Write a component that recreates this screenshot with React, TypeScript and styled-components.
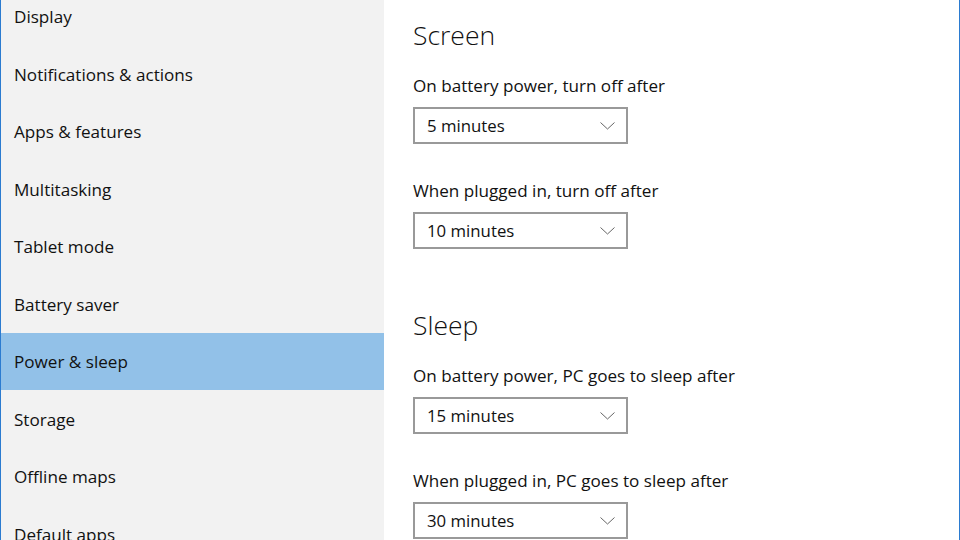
import React from "react";
import styled, { createGlobalStyle } from "styled-components";

const Global = createGlobalStyle`
  html, body { margin: 0; padding: 0; background: #fff; }
  body { font-family: "Segoe UI", "Open Sans", sans-serif; }
  #root { width: 960px; height: 540px; overflow: hidden; }
`;

const Window = styled.div`
  width: 960px;
  height: 540px;
  display: flex;
  box-sizing: border-box;
  border-left: 1px solid #2b7bd0;
  border-right: 1px solid #2b7bd0;
  overflow: hidden;
  background: #fff;
`;

const Sidebar = styled.nav`
  width: 383px;
  flex: none;
  background: #f2f2f2;
  display: flex;
  flex-direction: column;
  overflow: hidden;
`;

const NavList = styled.div`
  display: flex;
  flex-direction: column;
  margin-top: -12.25px;
`;

const NavItem = styled.div<{ $active?: boolean }>`
  height: 57.5px;
  flex: none;
  display: flex;
  align-items: center;
  padding-left: 13px;
  font-size: 17.1px;
  color: #111;
  background: ${(p) => (p.$active ? "#92c1e8" : "transparent")};
`;

const Content = styled.main`
  flex: 1;
  padding: 15px 0 0 29px;
  display: flex;
  flex-direction: column;
`;

const Section = styled.section`
  display: flex;
  flex-direction: column;
  & + & {
    margin-top: 56px;
  }
`;

const Heading = styled.h2`
  margin: 0 0 20px;
  font-size: 26.5px;
  line-height: 40px;
  font-weight: 300;
  color: #111;
`;

const Field = styled.div`
  display: flex;
  flex-direction: column;
  gap: 10px;
  & + & {
    margin-top: 36px;
  }
`;

const Label = styled.div`
  font-size: 17.1px;
  line-height: 22px;
  color: #111;
`;

const Select = styled.div`
  width: 215px;
  height: 37px;
  box-sizing: border-box;
  border: 2px solid #999;
  display: flex;
  align-items: center;
  justify-content: space-between;
  padding: 0 11px 0 12px;
  font-size: 16.8px;
  color: #111;
  background: #fff;
`;

const Chevron = () => (
  <svg width="15" height="8" viewBox="0 0 15 8">
    <polyline points="0.5,0.5 7.5,7 14.5,0.5" fill="none" stroke="#666" strokeWidth="1" />
  </svg>
);

const navItems = [
  "Display",
  "Notifications & actions",
  "Apps & features",
  "Multitasking",
  "Tablet mode",
  "Battery saver",
  "Power & sleep",
  "Storage",
  "Offline maps",
  "Default apps",
];

const sections = [
  {
    title: "Screen",
    fields: [
      { label: "On battery power, turn off after", value: "5 minutes" },
      { label: "When plugged in, turn off after", value: "10 minutes" },
    ],
  },
  {
    title: "Sleep",
    fields: [
      { label: "On battery power, PC goes to sleep after", value: "15 minutes" },
      { label: "When plugged in, PC goes to sleep after", value: "30 minutes" },
    ],
  },
];

export default function App() {
  return (
    <>
      <Global />
      <Window>
        <Sidebar>
          <NavList>
            {navItems.map((n) => (
              <NavItem key={n} $active={n === "Power & sleep"}>
                {n}
              </NavItem>
            ))}
          </NavList>
        </Sidebar>
        <Content>
          {sections.map((s) => (
            <Section key={s.title}>
              <Heading>{s.title}</Heading>
              {s.fields.map((f) => (
                <Field key={f.label}>
                  <Label>{f.label}</Label>
                  <Select>
                    <span>{f.value}</span>
                    <Chevron />
                  </Select>
                </Field>
              ))}
            </Section>
          ))}
        </Content>
      </Window>
    </>
  );
}
